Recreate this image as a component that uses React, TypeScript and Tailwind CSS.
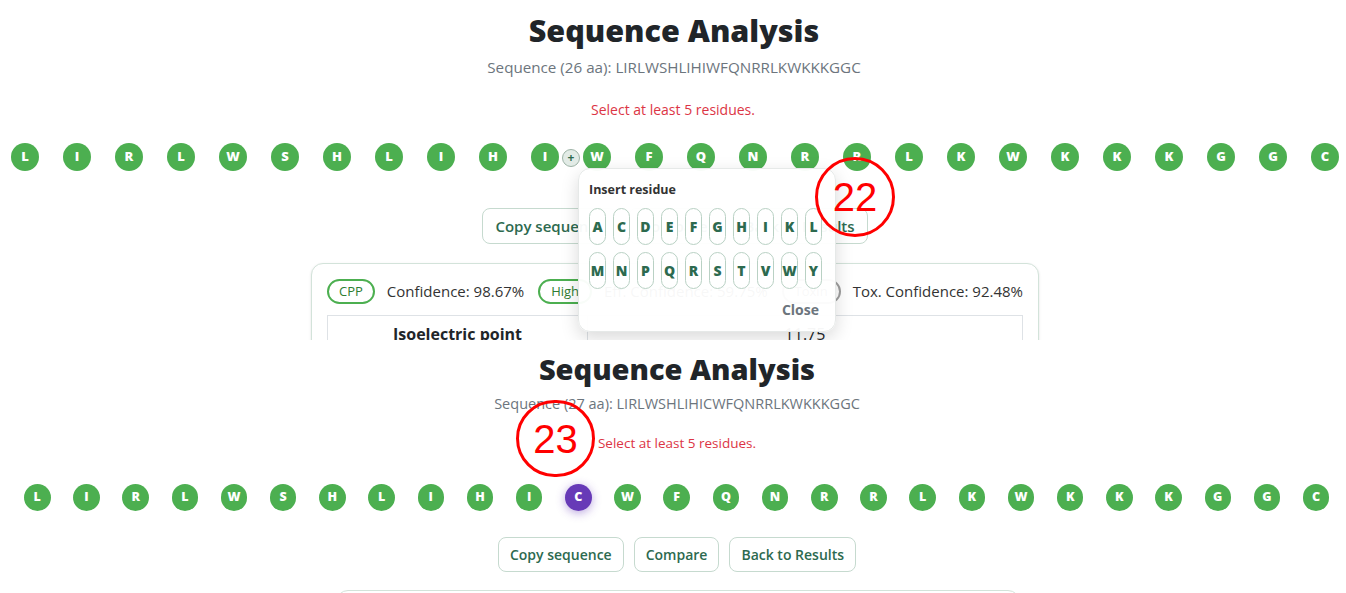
import React from "react";

const TOP_SEQ = "LIRLWSHLIHIWFQNRRLKWKKKGGC".split("");
const BOTTOM_SEQ = "LIRLWSHLIHICWFQNRRLKWKKKGGC".split("");
const ROW1 = "ACDEFGHIKL".split("");
const ROW2 = "MNPQRSTVWY".split("");

function Marker({ label, className }: { label: string; className: string }) {
  return (
    <div
      className={`absolute rounded-full border-[3px] border-[#ff0000] flex items-center justify-center pointer-events-none ${className}`}
    >
      <span className="text-[40px] leading-none text-[#ff0000] font-['Liberation_Sans',sans-serif]">{label}</span>
    </div>
  );
}

function InsertPopup() {
  return (
    <div className="absolute left-[578px] top-[168px] w-[258px] h-[164px] rounded-xl bg-white/[0.96] border border-[#e6e9e8] shadow-[0_6px_18px_rgba(0,0,0,0.15)] px-[10px] pt-[12px] z-20">
      <div className="text-[12.5px] font-bold text-[#333] leading-[18px]">Insert residue</div>
      <div className="mt-[9px] flex flex-col gap-[7px]">
        {[ROW1, ROW2].map((row, i) => (
          <div key={i} className="flex gap-[7px]">
            {row.map((c) => (
              <div
                key={c}
                className="w-[17px] h-[37px] rounded-full border border-[#b9d1c4] bg-white flex items-center justify-center text-[14px] font-extrabold text-[#2d6a4f]"
              >
                {c}
              </div>
            ))}
          </div>
        ))}
      </div>
      <div className="flex justify-end pr-[6px] mt-[10px]">
        <span className="text-[14px] font-bold text-[#6c757d]">Close</span>
      </div>
    </div>
  );
}

function TopPanel() {
  return (
    <div className="relative h-[340px] overflow-hidden">
      <h1 className="text-center text-[30.5px] font-extrabold text-[#212529] leading-[40px] pt-[10px] pl-[2px]">Sequence Analysis</h1>
      <p className="text-center text-[15.2px] text-[#6c757d] leading-[20px] mt-[7px] pl-[2px]">
        Sequence (26 aa): LIRLWSHLIHIWFQNRRLKWKKKGGC
      </p>
      <p className="text-center text-[14px] text-[#dc3545] leading-[20px] mt-[23px]">Select at least 5 residues.</p>
      <div className="flex gap-[24px] pl-[11px] mt-[23px]">
        {TOP_SEQ.map((c, i) => (
          <div key={i} className="relative shrink-0">
            <div className="w-[28px] h-[28px] rounded-full bg-[#4caf50] text-white flex items-center justify-center text-[13px] font-extrabold">
              {c}
            </div>
            {i === 10 && (
              <div className="absolute left-[31px] top-[6px] w-[18px] h-[18px] rounded-full bg-[#e2ebe6] border border-[#9db3a6] flex items-center justify-center text-[12px] font-bold text-[#2d6a4f] leading-none z-10">
                +
              </div>
            )}
          </div>
        ))}
      </div>
      <div className="flex justify-center gap-[11px] mt-[37px] pl-[4px]">
        {["Copy sequence", "Compare", "Back to Results"].map((b) => (
          <button
            key={b}
            className="h-[36px] px-[12px] rounded-lg border border-[#c6dacf] bg-white text-[15px] font-semibold text-[#2d6a4f]"
          >
            {b}
          </button>
        ))}
      </div>
      <div className="mt-[19px] ml-[311px] w-[728px] rounded-xl border border-[#d3e3da] bg-white px-[15px] pt-[15px] pb-[10px] shadow-sm">
        <div className="flex items-center justify-between">
          <div className="flex items-center gap-3">
            <span className="h-[25px] px-[10px] rounded-full border-2 border-[#4caf50] text-[13px] text-[#2e7d32] flex items-center">CPP</span>
            <span className="text-[15px] text-[#333]">Confidence: 98.67%</span>
          </div>
          <div className="flex items-center gap-3">
            <span className="h-[25px] px-[11px] rounded-full border-2 border-[#4caf50] text-[13px] text-[#2e7d32] flex items-center">High</span>
            <span className="text-[15px] text-[#333]">Eff. Confidence: 59.75%</span>
          </div>
          <div className="flex items-center gap-3">
            <span className="h-[25px] px-[11px] rounded-full border-2 border-[#9e9e9e] text-[13px] text-[#555] flex items-center">Toxin</span>
            <span className="text-[15px] text-[#333]">Tox. Confidence: 92.48%</span>
          </div>
        </div>
        <table className="w-full mt-[11px] border border-[#dee2e6] border-collapse">
          <tbody>
            <tr>
              <td className="w-[260px] border border-[#dee2e6] text-center text-[16px] font-bold text-[#212529] py-[6px]">Isoelectric point</td>
              <td className="border border-[#dee2e6] text-center text-[16px] text-[#212529] py-[6px]">11.75</td>
            </tr>
          </tbody>
        </table>
      </div>
      <InsertPopup />
      <Marker label="22" className="left-[815px] top-[157px] w-[80px] h-[80px] z-30" />
    </div>
  );
}

function BottomPanel() {
  return (
    <div className="relative h-[253px] overflow-hidden">
      <h1 className="text-center text-[29px] font-extrabold text-[#212529] leading-[38px] pt-[10px] pl-[8px]">Sequence Analysis</h1>
      <p className="text-center text-[14.5px] text-[#6c757d] leading-[19px] mt-[6px] pl-[8px]">
        Sequence (27 aa): LIRLWSHLIHICWFQNRRLKWKKKGGC
      </p>
      <p className="text-center text-[13.5px] text-[#dc3545] leading-[19px] mt-[21px] pl-[8px]">Select at least 5 residues.</p>
      <div className="flex gap-[22.7px] pl-[24px] mt-[31px]">
        {BOTTOM_SEQ.map((c, i) => (
          <div
            key={i}
            className={`w-[26.5px] h-[26.5px] shrink-0 rounded-full text-white flex items-center justify-center text-[12.5px] font-extrabold ${
              i === 11 ? "bg-[#673ab7] shadow-[0_2px_10px_rgba(103,58,183,0.45)]" : "bg-[#4caf50]"
            }`}
          >
            {c}
          </div>
        ))}
      </div>
      <div className="flex justify-center gap-[10px] mt-[26px] pl-[8px]">
        {["Copy sequence", "Compare", "Back to Results"].map((b) => (
          <button
            key={b}
            className="h-[35px] px-[11px] rounded-lg border border-[#c6dacf] bg-white text-[14px] font-semibold text-[#2d6a4f]"
          >
            {b}
          </button>
        ))}
      </div>
      <div className="mt-[18px] ml-[336px] w-[684px] h-[40px] rounded-xl border border-[#d3e3da] bg-white" />
      <Marker label="23" className="left-[516px] top-[60px] w-[79px] h-[77px] z-30" />
    </div>
  );
}

export default function App() {
  return (
    <div className="w-[1346px] h-[593px] overflow-hidden bg-white font-['Open_Sans',sans-serif]">
      <TopPanel />
      <BottomPanel />
    </div>
  );
}
